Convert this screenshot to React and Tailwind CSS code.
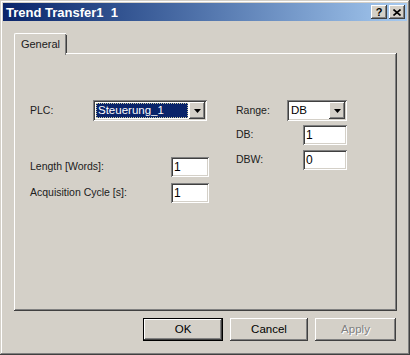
import React from "react";

const raised =
  "shadow-[inset_-1px_-1px_#404040,inset_1px_1px_#ffffff,inset_-2px_-2px_#808080,inset_2px_2px_#d4d0c8]";
const sunken =
  "shadow-[inset_1px_1px_#808080,inset_-1px_-1px_#ffffff,inset_2px_2px_#404040,inset_-2px_-2px_#d4d0c8]";

function Arrow() {
  return (
    <svg width="7" height="4" viewBox="0 0 7 4">
      <polygon points="0,0 7,0 3.5,4" fill="#000" />
    </svg>
  );
}

function Combo({ width, text, selected }) {
  return (
    <div className={`h-[21px] bg-white flex items-stretch p-[2px] ${sunken}`} style={{ width }}>
      <div className="flex-1 flex items-center pl-[1px] pr-[1px] py-[1px]">
        {selected ? (
          <div className="h-full flex-1 bg-[#0a246a] text-white border border-dotted border-[#c8c8a0] flex items-center pl-[1px] text-[11.5px] leading-none">
            {text}
          </div>
        ) : (
          <div className="pl-[1px] text-[11.5px] leading-none text-black">{text}</div>
        )}
      </div>
      <div className={`w-[16px] bg-[#d4d0c8] flex items-center justify-center ${raised}`}>
        <Arrow />
      </div>
    </div>
  );
}

function Field({ width, value }) {
  return (
    <div
      className={`h-[20px] bg-white flex items-center pl-[3px] text-[12px] leading-none text-black ${sunken}`}
      style={{ width }}
    >
      {value}
    </div>
  );
}

function Btn({ children, width, def, disabled }) {
  return (
    <div
      className={`h-[23px] flex items-center justify-center text-[11.5px] ${
        def ? "border border-black" : ""
      }`}
      style={{ width }}
    >
      <div className={`w-full h-full flex items-center justify-center ${raised}`}>
        {disabled ? (
          <span className="text-[#808080] [text-shadow:1px_1px_#ffffff]">{children}</span>
        ) : (
          <span className="text-black">{children}</span>
        )}
      </div>
    </div>
  );
}

export default function App() {
  return (
    <div
      className={`w-[410px] h-[355px] bg-[#d4d0c8] p-[3px] flex flex-col font-['Liberation_Sans',Arial,sans-serif] shadow-[inset_-1px_-1px_#404040,inset_1px_1px_#d4d0c8,inset_-2px_-2px_#808080,inset_2px_2px_#ffffff]`}
    >
      {/* title bar */}
      <div className="h-[18px] flex items-center pl-[3px] pr-[2px] bg-gradient-to-r from-[#0a246a] to-[#a6caf0]">
        <span className="text-white font-bold text-[13px] leading-none whitespace-pre">
          {"Trend Transfer1  1"}
        </span>
        <div className="ml-auto flex gap-[2px]">
          <div className={`w-[16px] h-[14px] bg-[#d4d0c8] flex items-center justify-center ${raised}`}>
            <span className="text-[11px] font-bold leading-none text-black">?</span>
          </div>
          <div className={`w-[16px] h-[14px] bg-[#d4d0c8] flex items-center justify-center ${raised}`}>
            <svg width="8" height="7" viewBox="0 0 8 7">
              <path d="M0.5 0.5 L7.5 6.5 M7.5 0.5 L0.5 6.5" stroke="#000" strokeWidth="1.6" />
            </svg>
          </div>
        </div>
      </div>

      {/* body */}
      <div className="flex flex-col pl-[11px] pt-[12px]">
        {/* tab */}
        <div className="relative z-10 -mb-[2px] w-[52px] h-[22px] bg-[#d4d0c8] border-l border-t border-white rounded-tl-[2px] shadow-[inset_-1px_0_#808080] flex items-start justify-center pt-[4px]">
          <div className="absolute right-[-1px] top-[1px] bottom-[2px] w-[1px] bg-[#404040]" />
          <span className="text-[11px] text-[#202020] leading-none mt-[1px]">General</span>
        </div>

        {/* panel */}
        <div className={`w-[383px] h-[258px] bg-[#d4d0c8] ${raised} pt-[47px] pl-[16px] flex`}>
          {/* left column */}
          <div className="w-[179px] flex flex-col text-[10.5px] text-[#202020]">
            <div className="flex items-center h-[21px]">
              <span className="w-[63px]">PLC:</span>
              <Combo width={114} text="Steuerung_1" selected />
            </div>
            <div className="flex items-center mt-[36px] h-[20px]">
              <span className="w-[141px]">Length [Words]:</span>
              <Field width={38} value="1" />
            </div>
            <div className="flex items-center mt-[6px] h-[20px]">
              <span className="w-[141px]">Acquisition Cycle [s]:</span>
              <Field width={38} value="1" />
            </div>
          </div>

          {/* right column */}
          <div className="ml-[27px] flex flex-col text-[10.5px] text-[#202020]">
            <div className="flex items-center h-[21px]">
              <span className="w-[51px]">Range:</span>
              <Combo width={60} text="DB" />
            </div>
            <div className="flex items-center mt-[4px] h-[20px]">
              <span className="w-[67px]">DB:</span>
              <Field width={44} value="1" />
            </div>
            <div className="flex items-center mt-[5px] h-[20px]">
              <span className="w-[67px]">DBW:</span>
              <Field width={44} value="0" />
            </div>
          </div>
        </div>

        {/* buttons */}
        <div className="flex mt-[7px] ml-[129px] gap-[7px]">
          <Btn width={80} def>
            OK
          </Btn>
          <Btn width={78}>Cancel</Btn>
          <Btn width={81} disabled>
            Apply
          </Btn>
        </div>
      </div>
    </div>
  );
}
